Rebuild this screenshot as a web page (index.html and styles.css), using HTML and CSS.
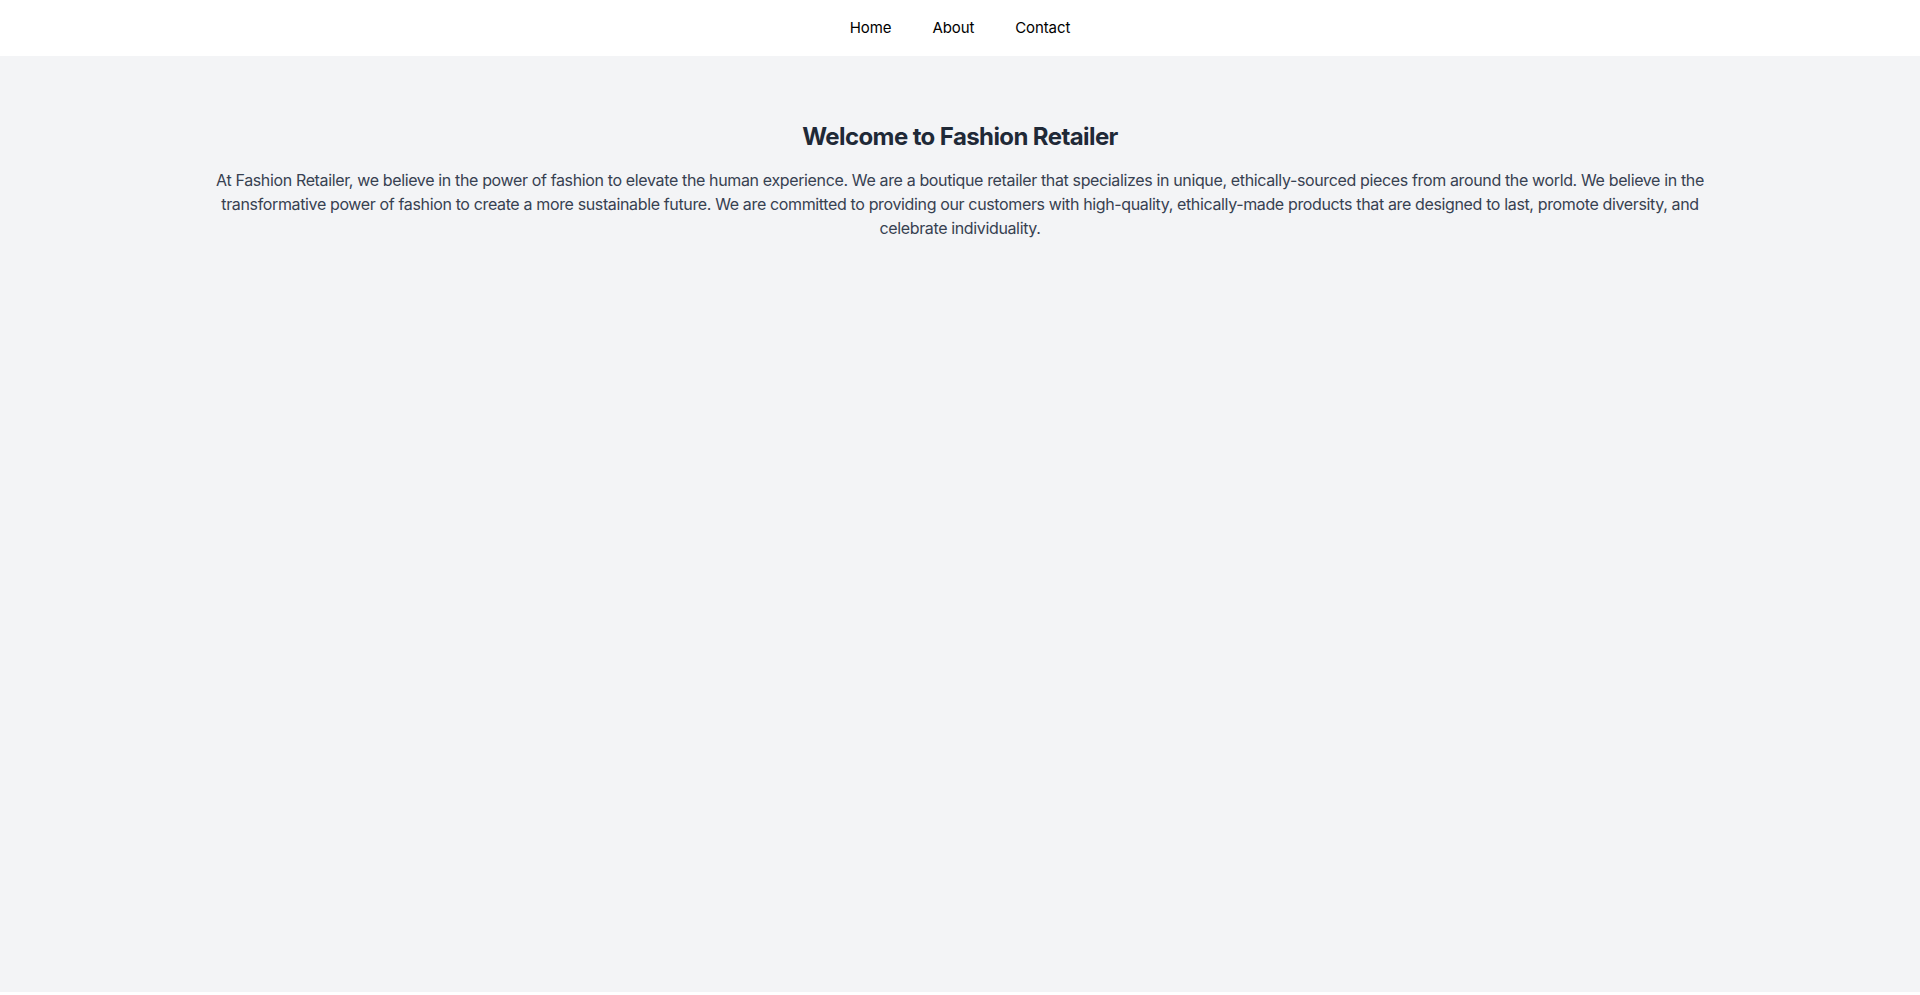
FILE: index.html
```html
<!DOCTYPE html>
<html lang="en">
<head>
<meta charset="utf-8">
<title>Fashion Retailer</title>
<link rel="stylesheet" href="styles.css">
</head>
<body>
<nav class="nav">
  <a class="nav-link" href="#">Home</a>
  <a class="nav-link" href="#">About</a>
  <a class="nav-link" href="#">Contact</a>
</nav>
<main class="main">
  <div class="container">
    <h1 class="title">Welcome to Fashion Retailer</h1>
    <p class="intro">At Fashion Retailer, we believe in the power of fashion to elevate the human experience. We are a boutique retailer that specializes in unique, ethically-sourced pieces from around the world. We believe in the transformative power of fashion to create a more sustainable future. We are committed to providing our customers with high-quality, ethically-made products that are designed to last, promote diversity, and celebrate individuality.</p>
  </div>
</main>
</body>
</html>
```

FILE: styles.css
```css
* { box-sizing: border-box; }
html, body { margin: 0; padding: 0; }
body {
  background: #ffffff;
  font-family: Inter, "Noto Sans", sans-serif;
  color: #111827;
}
.nav {
  height: 56px;
  background: #ffffff;
  display: flex;
  justify-content: center;
  align-items: center;
  gap: 41px;
}
.nav-link {
  color: #000000;
  text-decoration: none;
  font-size: 15px;
  line-height: 20px;
  letter-spacing: -0.1px;
}
.main {
  background: #f3f4f6;
  height: 936px;
  padding-top: 65px;
}
.container {
  max-width: 1536px;
  margin: 0 auto;
  padding: 0 16px;
  text-align: center;
}
.title {
  margin: 0 0 15px;
  font-size: 24px;
  line-height: 32px;
  font-weight: 700;
  color: #1f2937;
  letter-spacing: -0.6px;
}
.intro {
  margin: 0;
  font-size: 16px;
  line-height: 24px;
  color: #374151;
  letter-spacing: -0.36px;
}
```
